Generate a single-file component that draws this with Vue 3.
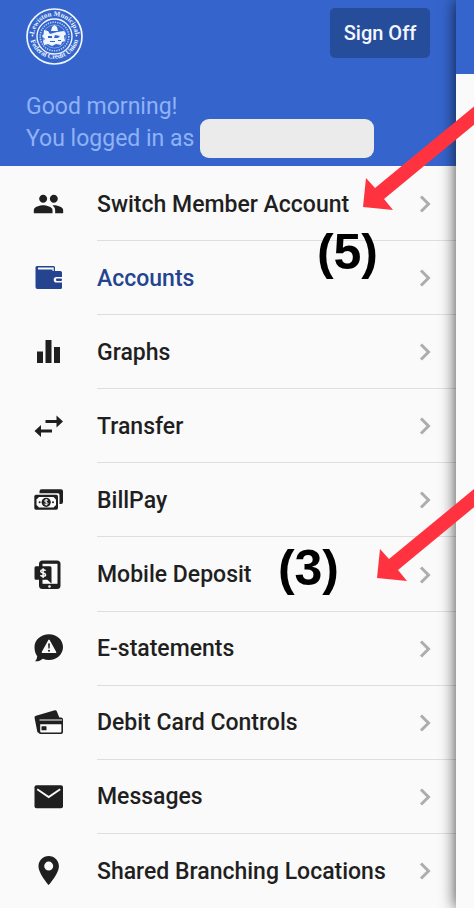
<script setup>
import { ref } from "vue";

const active = ref("accounts");

const items = [
  { id: "switch", label: "Switch Member Account", note: "(5)" },
  { id: "accounts", label: "Accounts" },
  { id: "graphs", label: "Graphs" },
  { id: "transfer", label: "Transfer" },
  { id: "billpay", label: "BillPay" },
  { id: "deposit", label: "Mobile Deposit", note: "(3)" },
  { id: "statements", label: "E-statements" },
  { id: "cards", label: "Debit Card Controls" },
  { id: "messages", label: "Messages" },
  { id: "locations", label: "Shared Branching Locations" },
];
</script>

<template>
  <div class="screen">
    <div class="drawer">
      <header class="header">
        <div class="topbar">
          <svg class="logo" viewBox="0 0 57 57" role="img" aria-label="Lewiston Municipal Federal Credit Union">
            <defs>
              <path id="ringtop" d="M8 28.5a20.500 20.500 0 0 1 41 0" />
              <path id="ringbottom" d="M3.800 26a24.700 24.700 0 0 0 49.400 0" />
            </defs>
            <circle cx="28.5" cy="28.5" r="27.5" fill="none" stroke="#eef6ff" stroke-width="1.7" />
            <circle cx="28.5" cy="28.5" r="17.5" fill="none" stroke="#eef6ff" stroke-width="1.4" />
            <circle cx="28.5" cy="28.5" r="14.3" fill="none" stroke="#b5cdf8" stroke-width="1.6" stroke-dasharray="1.3 1.1" />
            <circle cx="28.5" cy="28.5" r="11.6" fill="none" stroke="#a9c4f5" stroke-width="0.6" />
            <text class="logotext"><textPath href="#ringtop" startOffset="50%" text-anchor="middle">Lewiston Municipal</textPath></text>
            <text class="logotext"><textPath href="#ringbottom" startOffset="50%" text-anchor="middle">Federal Credit Union</textPath></text>
            <circle cx="6.5" cy="27.500" r="0.9" fill="#eef6ff" />
            <circle cx="50.5" cy="27.500" r="0.9" fill="#eef6ff" />
            <path fill="#eef6ff" d="M25 23l1-4 2.500-2 2.500 2 1 4zM18 22l4 1 2 3 7-2 7-1 2 3-2 2 1 5-3 1-1 3-5-1-4 2-4-2-4 1-1-4 2-2-3-3 2-2z" />
            <path fill="#3565cc" d="M22 28h4v2h-4zM29 27l5 1-2 2-4 0zM24 33h5v1h-5zM32 32h3v1h-3z" />
          </svg>
          <button type="button" class="signoff">Sign Off</button>
        </div>
        <div class="greeting">Good morning!</div>
        <div class="user">
          <span>You logged in as</span>
          <span class="username"></span>
        </div>
      </header>

      <nav class="nav">
        <ul class="menu">
          <li v-for="item in items" :key="item.id" class="item">
            <a
              :href="'#' + item.id"
              class="link"
              :class="{ active: active === item.id }"
              @click="active = item.id"
            >
              <svg class="icon" viewBox="0 0 32 32" aria-hidden="true">
                <g v-if="item.id === 'switch'" transform="translate(.5 0) scale(1.333)">
                  <path d="M16 11c1.660 0 2.990-1.340 2.990-3S17.660 5 16 5s-3 1.340-3 3 1.340 3 3 3zm-8 0c1.660 0 2.990-1.340 2.990-3S9.660 5 8 5 5 6.340 5 8s1.340 3 3 3zm0 2c-2.330 0-7 1.170-7 3.500V19h14v-2.500c0-2.330-4.670-3.500-7-3.500zm8 0c-.290 0-.620.020-.970.050 1.160.840 1.970 1.970 1.970 3.450V19h6v-2.500c0-2.330-4.670-3.500-7-3.500z" />
                </g>
                <g v-else-if="item.id === 'accounts'">
                  <path fill-rule="evenodd" d="M5 4h16.500a1.500 1.500 0 0 1 1.500 1.500V9h5.500A1.500 1.500 0 0 1 30 10.500V15h-5.500a2.800 2.800 0 0 0 0 5.600H30v4.900a1.500 1.500 0 0 1-1.500 1.500h-23A2 2 0 0 1 3.500 25V5.500A1.500 1.500 0 0 1 5 4zm1 1.600V7.500h14.500V9h1.200V5.600z" />
                  <rect x="24" y="16.500" width="6" height="2.600" rx="1" />
                </g>
                <g v-else-if="item.id === 'graphs'">
                  <rect x="5" y="15.500" width="6" height="11.500" />
                  <rect x="13.500" y="4" width="6" height="23" />
                  <rect x="22" y="11" width="6" height="16" />
                </g>
                <g v-else-if="item.id === 'transfer'">
                  <path d="M31 11.500L24.500 5.500V10H13.500v3h11v4.500z" />
                  <path d="M2.500 21L9 15v4.500h11v3H9V27z" />
                </g>
                <g v-else-if="item.id === 'billpay'">
                  <path d="M9.500 5.300h19.500a2 2 0 0 1 2 2V18a2 2 0 0 1-2 2h-1.500v-9.200a1.500 1.500 0 0 0-1.500-1.500H7.500v-2a2 2 0 0 1 2-2z" />
                  <rect x="2.300" y="10.800" width="23.700" height="15" rx="1.700" />
                  <path class="cut" d="M7 13h14.500l2.500 2.500v5.500l-2.500 2.500H7L4.500 21v-5.500z" />
                  <circle cx="14.200" cy="18.300" r="4.600" />
                  <circle cx="7.600" cy="18.300" r="1" />
                  <circle cx="21" cy="18.300" r="1" />
                  <path class="line" stroke-width="1" d="M16 16.500c-.7-.8-3.400-.9-3.400.5 0 1.500 3.300.9 3.300 2.500 0 1.500-2.800 1.300-3.500.4M14.200 15v6.600" />
                </g>
                <g v-else-if="item.id === 'deposit'">
                  <rect x="7" y="1.500" width="21.500" height="28.500" rx="3.500" />
                  <rect class="cut" x="10.500" y="4.800" width="15" height="20" />
                  <path d="M4 7.200h14a1.500 1.500 0 0 1 1.500 1.500V24.500l-4.200-3.700H4a1.500 1.500 0 0 1-1.500-1.500V8.700A1.500 1.500 0 0 1 4 7.200z" />
                  <path class="line" stroke-width="1.500" d="M13.600 11.700c-1.200-1.300-4.900-1.300-4.900.6 0 2.100 4.900 1.300 4.900 3.500 0 2-4 1.900-5.200.5M11.100 9.300v9.600" />
                  <circle class="cut" cx="17.500" cy="27.500" r="1.300" />
                </g>
                <g v-else-if="item.id === 'statements'">
                  <path d="M17 1.200c7.900 0 14 5.600 14 12.800S25 27 17 27c-2.300 0-4.300-.4-6.200-1.200C8.800 27.700 6 28.500 3 28.300c1.400-1.200 2.100-3.200 2.200-5C3.500 20.800 2.500 17.800 2.500 14 2.500 6.800 9 1.200 17 1.200z" />
                  <path class="cut" d="M17 7.300l6.600 12H10.400z" stroke="#fafafa" stroke-width="1.500" stroke-linejoin="round" />
                  <path d="M16.100 10.500h1.800l-.3 5h-1.200z" />
                  <circle cx="17" cy="17.700" r="1" />
                </g>
                <g v-else-if="item.id === 'cards'">
                  <path d="M4 8.700L22.800 3.300a1.800 1.800 0 0 1 2 1l3 7.500-19 14.200-2.200-.3a1.500 1.500 0 0 1-1.300-1L2.600 11A1.800 1.800 0 0 1 4 8.700z" />
                  <rect x="6.500" y="10.500" width="24.500" height="16.500" rx="2" />
                  <path class="cut" d="M7.500 12.400h22.500v1.100H7.500zM8.200 17.200h21.200v7.300a1 1 0 0 1-1 1H9.200a1 1 0 0 1-1-1z" />
                  <rect x="9.500" y="19.300" width="5" height="4" rx=".5" />
                </g>
                <g v-else-if="item.id === 'messages'">
                  <rect x="2.500" y="4.300" width="28.500" height="23" rx="2" />
                  <path class="line" stroke-width="1.900" d="M5.200 8.300l11.500 7.700 11.500-7.700" />
                </g>
                <path
                  v-else
                  fill-rule="evenodd"
                  d="M16.700 1C11 1 6.500 5.500 6.500 11.200c0 7.500 10.200 18.800 10.200 18.800s10.200-11.300 10.200-18.800C26.900 5.500 22.400 1 16.700 1zm0 5.600a4.500 4.500 0 1 1 0 9 4.500 4.500 0 0 1 0-9z"
                />
              </svg>
              <span class="text">
                <span>{{ item.label }}</span>
                <svg class="chevron" viewBox="0 0 12 18" aria-hidden="true">
                  <path d="M2 1.500l7.500 7.500L2 16.500" />
                </svg>
              </span>
            </a>
            <template v-if="item.note">
              <span class="note" :class="item.id">{{ item.note }}</span>
              <svg class="arrow" :class="item.id" viewBox="0 0 136 124" aria-hidden="true">
                <path d="M0 121L3 92l9 10L136 0v18L21 113l9 11z" />
              </svg>
            </template>
          </li>
        </ul>
      </nav>
    </div>

    <div class="page">
      <div class="pagebar"></div>
    </div>
  </div>
</template>

<style>
body {
  margin: 0;
  background: #fafafa;
}
</style>

<style scoped>
.screen {
  position: relative;
  display: flex;
  min-height: 100vh;
  overflow: hidden;
  background: #fafafa;
  font-family: Roboto, "Liberation Sans", sans-serif;
}
.drawer {
  flex: 1;
  min-width: 0;
  display: flex;
  flex-direction: column;
}
.header {
  padding: 8px 26px;
  background: #3565cc;
  color: #8fb2f6;
  font-size: 23px;
  line-height: 24px;
}
.topbar {
  display: flex;
  justify-content: space-between;
  align-items: flex-start;
  margin-bottom: 30px;
}
.logo {
  width: 57px;
  height: 57px;
}
.logotext {
  font-family: "Liberation Serif", serif;
  font-size: 7px;
  font-weight: bold;
  fill: #eef6ff;
}
.signoff {
  width: 100px;
  height: 50px;
  padding: 0;
  border: 0;
  border-radius: 5px;
  background: #264d99;
  color: #f2f7ff;
  font-family: inherit;
  font-size: 20px;
  font-weight: 500;
  cursor: pointer;
}
.user {
  display: flex;
  align-items: center;
  gap: 6px;
}
.username {
  width: 174px;
  height: 39px;
  border-radius: 9px;
  background: #ebebeb;
}
.nav {
  flex: 1;
  display: flex;
  padding-top: 1px;
}
.menu {
  flex: 1;
  display: grid;
  grid-auto-rows: 1fr;
  margin: 0;
  padding: 0;
  list-style: none;
}
.item {
  position: relative;
  display: flex;
  min-height: 72px;
}
.link {
  flex: 1;
  display: flex;
  align-items: center;
  gap: 33px;
  padding-left: 32px;
  color: #1f1f1f;
  fill: currentColor;
  font-size: 23px;
  font-weight: 500;
  text-decoration: none;
}
.link.active {
  color: #24448f;
}
.icon {
  flex: none;
  width: 32px;
  height: 32px;
}
.cut {
  fill: #fafafa;
}
.line {
  fill: none;
  stroke: #fafafa;
}
.text {
  flex: 1;
  align-self: stretch;
  display: flex;
  align-items: center;
  justify-content: space-between;
  padding-top: 1px;
  padding-right: 25px;
  border-bottom: 1px solid #dedede;
  white-space: nowrap;
}
.item:last-child .text {
  border-bottom: 0;
}
.chevron {
  width: 12px;
  height: 18px;
  fill: none;
  stroke: #adadad;
  stroke-width: 3;
}
.note {
  position: absolute;
  z-index: 3;
  color: #000;
  font-family: "Liberation Sans", Arial, sans-serif;
  font-size: 50px;
  font-weight: bold;
  line-height: 50px;
  pointer-events: none;
}
.note.switch {
  top: 60px;
  right: 78px;
}
.note.deposit {
  top: 6px;
  right: 117px;
}
.arrow {
  position: absolute;
  z-index: 3;
  bottom: 31px;
  width: 136px;
  height: 124px;
  fill: #ff3340;
  pointer-events: none;
}
.arrow.switch {
  right: -43px;
}
.arrow.deposit {
  right: -57px;
}
.page {
  position: relative;
  z-index: 2;
  width: 18px;
  background: #fafafa;
  box-shadow: 0 0 16px rgba(0, 0, 0, 0.75);
}
.pagebar {
  height: 74px;
  background: #3565cc;
}
</style>
